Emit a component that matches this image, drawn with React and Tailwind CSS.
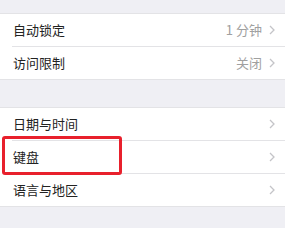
import React from "react";

const Chevron = () => (
  <svg width="6" height="10" viewBox="0 0 6 10" className="ml-[7px]">
    <path d="M1 1 L5 5 L1 9" fill="none" stroke="#c4c4c8" strokeWidth="1.3" />
  </svg>
);

const Divider = () => (
  <div className="h-px bg-white">
    <div className="ml-[12px] h-px bg-[#e3e3e6]" />
  </div>
);

const Row = ({ label, value, boxed }) => (
  <div className="relative h-[32px] bg-white flex items-center pl-[13px] pr-[10px]">
    <span className="text-[13px] text-[#222]">{label}</span>
    <div className="ml-auto flex items-center">
      {value && <span className="text-[13px] text-[#a0a0a0]">{value}</span>}
      <Chevron />
    </div>
    {boxed && (
      <div className="absolute z-10 left-[2px] top-[-5px] w-[120px] h-[39px] border-[3px] border-[#e8202c] rounded-[3px]" />
    )}
  </div>
);

export default function App() {
  return (
    <div
      className="w-[285px] h-[228px] bg-[#efeff4] overflow-hidden"
      style={{ fontFamily: '"Noto Sans CJK SC", "Noto Sans", sans-serif' }}
    >
      <div className="h-[14px] border-b border-[#e3e3e6]" />
      <Row label="自动锁定" value="1 分钟" />
      <Divider />
      <Row label="访问限制" value="关闭" />
      <div className="h-[29px] border-y border-[#e3e3e6]" />
      <Row label="日期与时间" />
      <Divider />
      <Row label="键盘" boxed />
      <Divider />
      <Row label="语言与地区" />
      <div className="border-t border-[#e3e3e6]" />
    </div>
  );
}
